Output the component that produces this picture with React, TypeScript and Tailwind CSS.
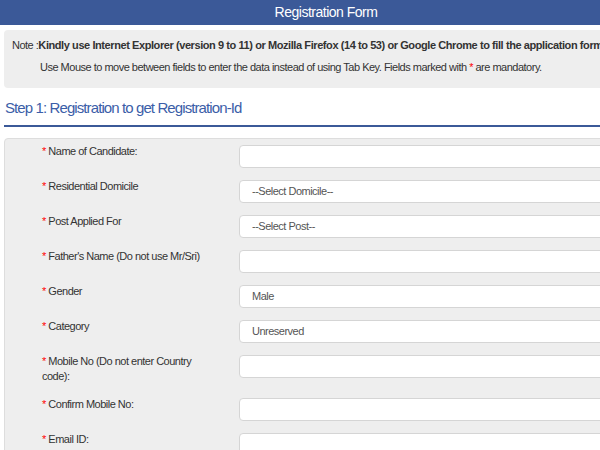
import React from "react";

const rows: { label: string; value?: string; tall?: boolean }[] = [
  { label: "Name of Candidate:" },
  { label: "Residential Domicile", value: "--Select Domicile--" },
  { label: "Post Applied For", value: "--Select Post--" },
  { label: "Father's Name (Do not use Mr/Sri)" },
  { label: "Gender", value: "Male" },
  { label: "Category", value: "Unreserved" },
  { label: "Mobile No (Do not enter Country code):", tall: true },
  { label: "Confirm Mobile No:" },
  { label: "Email ID:" },
];

export default function App() {
  return (
    <div className="w-[600px] h-[450px] overflow-hidden bg-white font-['Liberation_Sans',Arial,sans-serif] text-[#333]">
      <div className="w-[652px]">
        <div className="h-[25px] bg-[#3b5998] text-white text-[14px] tracking-[-0.5px] leading-[25px] text-center">
          Registration Form
        </div>
        <div className="mx-[4px] mt-[5px] h-[58px] rounded-[4px] bg-[#eeeeee] pt-[7px] text-[11px] tracking-[-0.5px] leading-[16px]">
          <div className="pl-[8px] whitespace-nowrap">
            Note :<span className="font-bold tracking-[-0.42px]">Kindly use Internet Explorer (version 9 to 11) or Mozilla Firefox (14 to 53) or Google Chrome to fill the application form</span>
          </div>
          <div className="pl-[36px] mt-[6px] whitespace-nowrap">
            Use Mouse to move between fields to enter the data instead of using Tab Key. Fields marked with <span className="text-[#ff0000]">*</span> are mandatory.
          </div>
        </div>
        <div className="mx-[4px] mt-[10px] pl-[1px] text-[15px] tracking-[-0.9px] leading-[20px] text-[#3b5ea8] pb-[7px] border-b-2 border-[#3b5998]">
          Step 1: Registration to get Registration-Id
        </div>
        <div className="mx-[4px] mt-[11px] rounded-tl-[4px] border border-[#dddddd] bg-[#eeeeee] pt-[6px]">
          {rows.map((r) => (
            <div key={r.label} className={"flex items-start " + (r.tall ? "mb-[14px]" : "mb-[12px]")}>
              <div className="w-[234px] shrink-0 pl-[37px] pr-[20px] text-[11px] tracking-[-0.5px] leading-[15px] -mt-[1px] text-[#333]">
                <span className="text-[#ff0000]">*</span> {r.label}
              </div>
              <div className="h-[23px] w-[400px] rounded-[4px] border border-[#d5d5d5] bg-white pl-[12px] text-[11px] tracking-[-0.5px] leading-[21px] text-[#555]">
                {r.value ?? ""}
              </div>
            </div>
          ))}
        </div>
      </div>
    </div>
  );
}
